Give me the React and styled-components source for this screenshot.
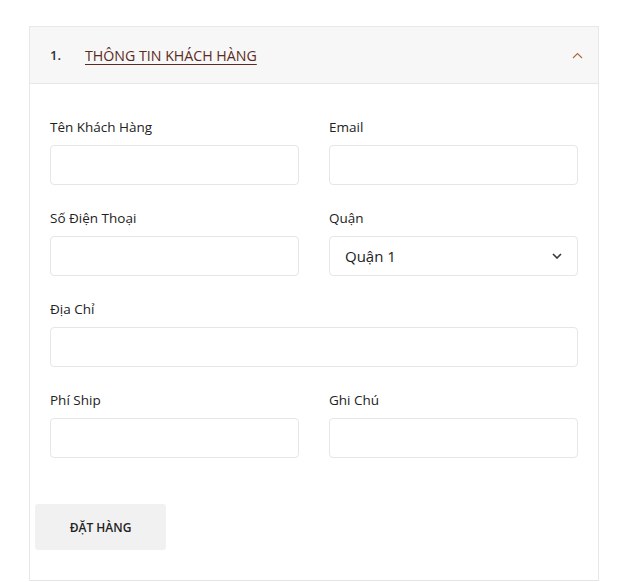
import React from 'react';
import styled, { createGlobalStyle } from 'styled-components';

const GlobalStyle = createGlobalStyle`
    body {
        margin: 0;
        background: #fff;
        font-family: "Open Sans", "Noto Sans", sans-serif;
        color: #222;
    }
`;

const Page = styled.div`
    padding: 26px 0 0 29px;
`;
const Card = styled.div`
    width: 570px;
    box-sizing: border-box;
    border: 1px solid #e8e8e8;
    border-bottom-color: #e4e4e4;
`;
const Header = styled.div`
    height: 56px;
    display: flex;
    align-items: center;
    padding: 0 15px 0 20px;
    background: #f7f7f7;
    border-bottom: 1px solid #e6e6e6;
`;
const Step = styled.span`
    width: 35px;
    font-size: 13px;
    font-weight: 600;
    color: #333;
`;
const Title = styled.a`
    flex: 1;
    font-size: 14.2px;
    color: #5b2b22;
    text-decoration: underline;
    text-underline-offset: 3px;
    cursor: pointer;
`;
const Body = styled.div`
    padding: 33px 20px 0;
`;
const Grid = styled.div`
    display: grid;
    grid-template-columns: 1fr 1fr;
    column-gap: 30px;
`;
const Group = styled.div`
    grid-column: ${p => (p.$wide ? '1 / span 2' : 'auto')};
    margin-bottom: 23px;
`;
const Label = styled.label`
    display: block;
    font-size: 13.5px;
    line-height: 20px;
    margin-bottom: 8px;
    color: #222;
`;
const Input = styled.input`
    display: block;
    width: 100%;
    height: 40px;
    box-sizing: border-box;
    border: 1px solid #e6e6e6;
    border-radius: 4px;
    padding: 0 15px;
    font-family: inherit;
    font-size: 15px;
    outline: none;
`;
const SelectBox = styled.div`
    position: relative;
    height: 40px;
    box-sizing: border-box;
    border: 1px solid #e6e6e6;
    border-radius: 4px;
    display: flex;
    align-items: center;
    padding: 0 15px;
    font-size: 15px;
    color: #222;
`;
const SelectText = styled.span`
    flex: 1;
`;
const Footer = styled.div`
    padding: 23px 0 30px 5px;
`;
const Button = styled.button`
    width: 131px;
    height: 46px;
    border: none;
    border-radius: 3px;
    background: #f1f1f1;
    font-family: inherit;
    font-size: 12px;
    font-weight: 600;
    color: #222;
    cursor: pointer;
`;

const ChevronUp = () => (
    <svg width="11" height="7" viewBox="0 0 11 7">
        <path d="M1 6 L5.5 1.5 L10 6" fill="none" stroke="#b0683a" strokeWidth="1.1" />
    </svg>
);

const ChevronDown = () => (
    <svg width="10" height="6" viewBox="0 0 10 6">
        <path d="M1 1 L5 5 L9 1" fill="none" stroke="#343a40" strokeWidth="1.6" />
    </svg>
);

const Field = ({ label, wide }) => (
    <Group $wide={wide}>
        <Label>{label}</Label>
        <Input type="text" />
    </Group>
);

export default function App() {
    return (
        <Page>
            <GlobalStyle />
            <Card>
                <Header>
                    <Step>1.</Step>
                    <Title>THÔNG TIN KHÁCH HÀNG</Title>
                    <ChevronUp />
                </Header>
                <Body>
                    <Grid>
                        <Field label="Tên Khách Hàng" />
                        <Field label="Email" />
                        <Field label="Số Điện Thoại" />
                        <Group>
                            <Label>Quận</Label>
                            <SelectBox>
                                <SelectText>Quận 1</SelectText>
                                <ChevronDown />
                            </SelectBox>
                        </Group>
                        <Field label="Địa Chỉ" wide />
                        <Field label="Phí Ship" />
                        <Field label="Ghi Chú" />
                    </Grid>
                </Body>
                <Footer>
                    <Button>ĐẶT HÀNG</Button>
                </Footer>
            </Card>
        </Page>
    );
}
